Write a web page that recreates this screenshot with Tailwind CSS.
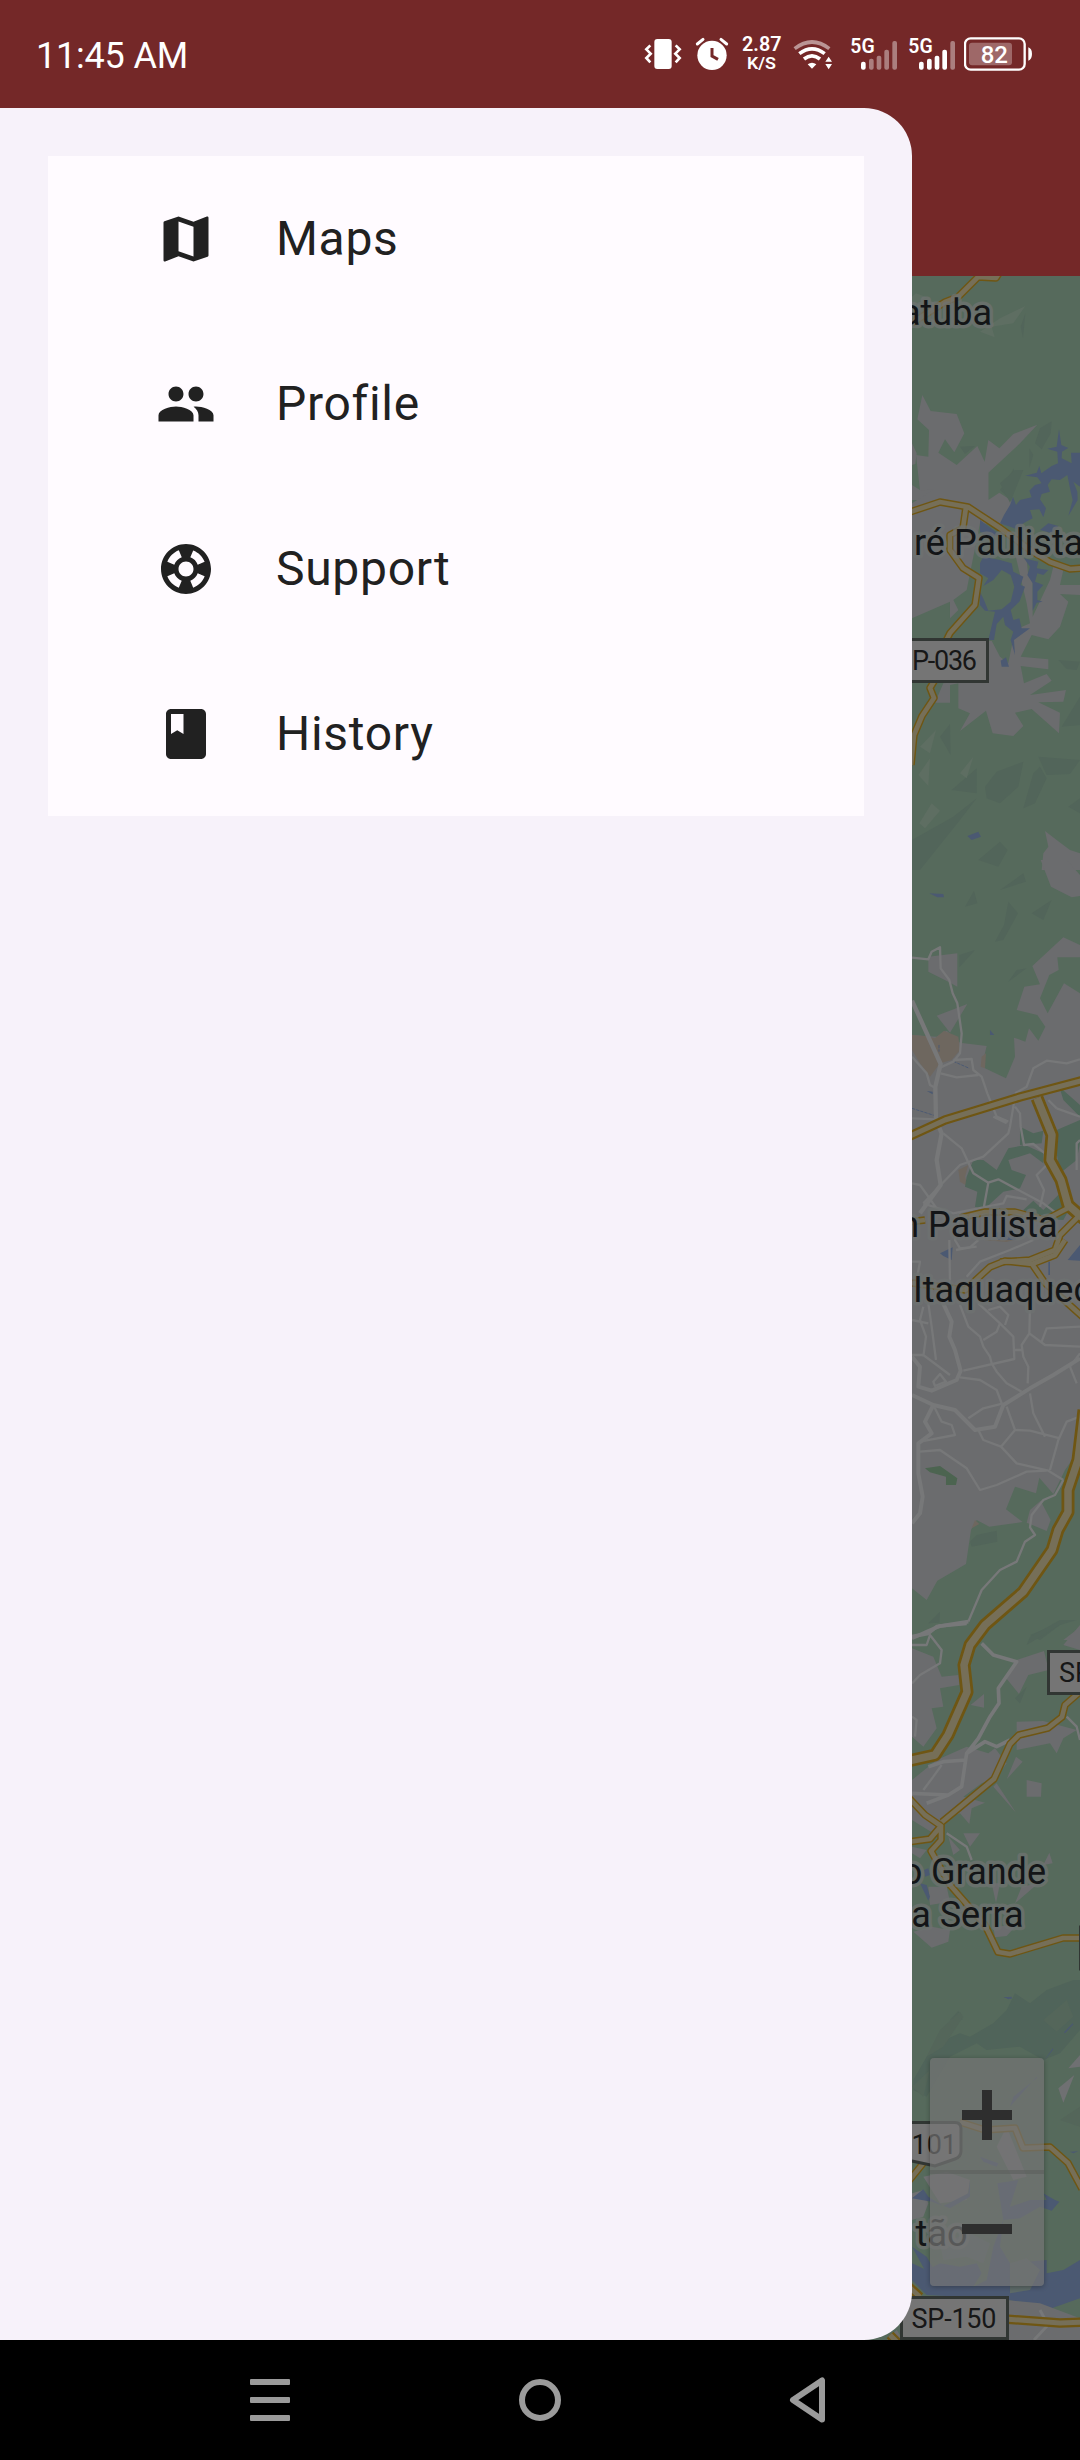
<!DOCTYPE html>
<html lang="en">
<head>
<meta charset="utf-8">
<title>Maps</title>
<script src="https://cdn.jsdelivr.net/npm/@tailwindcss/browser@4"></script>
</head>
<body class="bg-black">
<div class="relative flex h-[2460px] w-[1080px] flex-col overflow-hidden font-['Roboto',sans-serif]">

  <!-- App bar with the system status bar on top -->
  <header class="h-[276px] shrink-0 bg-[#742828]">
    <div class="flex h-[108px] items-start justify-between pl-[36px] pr-[47px] text-white">
      <span class="mt-[36px] text-[36px] leading-[40px] tracking-[-0.2px]">11:45 AM</span>
      <div class="mt-[35px] flex h-[36px]">
        <svg class="h-[36px] w-[38px]" viewBox="42 105 114 108" fill="none" stroke="#fff" stroke-width="8">
          <rect x="73" y="117" width="52" height="90" rx="9" fill="#fff" stroke="none"/>
          <path d="M61 136 49 148 62 161 49 174 61 187M137 136 149 148 136 161 149 174 137 187"/>
        </svg>
        <svg class="ml-[13px] h-[36px] w-[34px]" viewBox="195 105 102 108" fill="none" stroke="#fff" stroke-linecap="round">
          <circle cx="246" cy="166" r="44" fill="#fff" stroke="none"/>
          <path d="M202 132 219 118M290 132 273 118" stroke-width="9"/>
          <path d="M246 144V168L264 178" stroke="#742828" stroke-width="9" stroke-linecap="butt"/>
        </svg>
        <svg class="ml-[13px] h-[36px] w-[40px] overflow-visible" viewBox="742 35 40 36" fill="#fff" font-weight="600">
          <text x="742" y="51" font-size="20" textLength="39.500" lengthAdjust="spacingAndGlyphs">2.87</text>
          <text x="747" y="69.300" font-size="16.500" textLength="29" lengthAdjust="spacingAndGlyphs">K/S</text>
        </svg>
        <svg class="ml-[11px] h-[36px] w-[40px]" viewBox="489 105 120 108" fill="none" stroke="#fff" stroke-width="11">
          <path d="M494 146Q546 106 598 146" stroke-opacity=".5"/>
          <path d="M508 161Q546 132 584 161M522 177Q546 158 570 177"/>
          <path d="M533 193Q546 184 559 193L546 206Z" fill="#fff" stroke="none"/>
          <path d="M596 170 606 185H586ZM596 208 586 192H606Z" fill="#fff" stroke="none"/>
        </svg>
        <svg class="ml-[17px] h-[36px] w-[48px]" viewBox="660 105 144 108" fill="#fff">
          <text x="661" y="160" font-size="60" font-weight="600" textLength="73" lengthAdjust="spacingAndGlyphs">5G</text>
          <rect x="693" y="185" width="14" height="24" rx="6"/>
          <g fill-opacity=".4"><rect x="717" y="176" width="14" height="33" rx="6"/><rect x="740" y="167" width="14" height="42" rx="6"/><rect x="763" y="149" width="14" height="60" rx="6"/><rect x="787" y="123" width="14" height="86" rx="6"/></g>
        </svg>
        <svg class="ml-[10px] h-[36px] w-[48px]" viewBox="834 105 144 108" fill="#fff">
          <text x="835" y="160" font-size="60" font-weight="600" textLength="73" lengthAdjust="spacingAndGlyphs">5G</text>
          <rect x="867" y="185" width="14" height="24" rx="6"/><rect x="891" y="176" width="14" height="33" rx="6"/><rect x="914" y="167" width="14" height="42" rx="6"/><rect x="937" y="149" width="14" height="60" rx="6"/>
          <rect x="961" y="123" width="14" height="86" rx="6" fill-opacity=".4"/>
        </svg>
        <svg class="ml-[8px] h-[36px] w-[69px]" viewBox="1002 105 207 108" fill="#fff">
          <rect x="1005" y="115" width="179" height="94" rx="17" fill="none" stroke="#fff" stroke-width="7"/>
          <rect x="1017" y="128" width="129" height="68" rx="9" fill-opacity=".3"/>
          <path d="M1195 142Q1206 146 1206 162Q1206 178 1195 182Z"/>
          <text x="1052" y="188" font-size="73" font-weight="500" textLength="82" lengthAdjust="spacingAndGlyphs">82</text>
        </svg>
      </div>
    </div>
  </header>

  <!-- Map, dimmed by the open drawer -->
  <main class="relative flex h-[2064px] shrink-0 justify-end bg-[#566a5c]">
    <svg class="h-[2064px] w-[220px]" viewBox="860 276 220 2064">
      <rect x="860" y="276" width="220" height="2064" fill="#566a5c"/>

      <!-- land, water and terrain -->
      <g transform="translate(840 100) scale(.33333)" fill="#6b6c6e">
        <path d="M247 885 272 933 350 942 373 1000 343 1057 315 1018 295 1058 350 1095 412 1038 434 1085 445 1020 478 1045 520 1002 592 974 540 1030 445 1118V1200H240V1170L228 1065 265 1070 267 990 232 958Z"/>
        <path d="M216 1030 230 1060 226 1092 216 1095ZM216 1155 240 1170V1200H216Z"/>
        <path d="M216 590 228 580 260 592 216 620ZM420 695 480 655 556 618 520 670 455 680 464 712Z" fill="#5e6e62"/>
        <path d="M585 1030 600 985 635 964 632 1000 605 1048ZM480 1170 522 1105 512 1200ZM360 1040 405 1038 375 1062ZM568 1045 580 1065 568 1103ZM556 640 542 680 549 715Z" fill="#52655a"/>
      </g>
      <g transform="translate(900 470) scale(.33333)">
        <path d="M58 0H265V90L298 68 340 95 325 130 300 165 240 160 200 360 160 390 175 420 150 445 150 395 36 445V100L103 58 60 62Z" fill="#6b6c6e"/>
        <path d="M345 250 380 270 385 318 398 320V440L450 330 460 290 490 300 480 345 540 345V375L480 372 505 395 480 470 445 508 395 495 362 560 445 568V598L362 588 372 640 440 612 455 632 390 675 498 660 490 695 415 697 480 728 477 790 395 717 345 728 370 768 340 798 278 790 258 722 180 783 210 730 175 715V640L150 645V698H105L130 640 230 630 255 515 275 512 300 560 325 580 345 480 390 460 380 400Z" fill="#6b6c6e"/>
        <path d="M302 572 318 562 327 590 305 590ZM202 1098 235 1085 243 1100 215 1110Z" fill="#4b5972"/>
        <path d="M435 1083 470 1110 510 1140 540 1150V1200H425L430 1150 445 1130Z" fill="#6b6c6e"/>
        <g fill="#52655a">
          <path d="M255 950 290 905 370 875 355 950 300 1000 260 985ZM370 1015 400 910 420 890 440 925 405 1000ZM415 860 540 870 510 912 440 915ZM155 960 230 895 230 970ZM120 800 150 762 152 855ZM36 1110 160 1040 230 985 180 1050 60 1200H36ZM235 1170 300 1115 323 1140 295 1190ZM300 40 345 0H370L330 98ZM475 570 540 575 530 600 500 597ZM485 770 540 680V765ZM505 1010 540 985V1030Z"/>
        </g>
        <g fill="#5e6e62"><path d="M60 830 108 780 90 850ZM55 915 90 865 85 948ZM180 910 220 860 200 925ZM58 1060 95 1000 120 1022 75 1075Z"/></g>
      </g>
      <!-- reservoir -->
      <g transform="translate(980 420) scale(.33333)" fill="#4b5972">
        <path d="M237 28 244 75 265 84 246 95 245 115 275 130 273 98H300V200L280 185 292 215 293 240 265 288 278 240 270 205 262 165 240 180 215 178 203 195 210 215 185 222 180 238 198 265 190 292 178 268 150 270 158 295 130 310 118 330 60 310 72 285 90 255 99 230 108 255 120 240 155 232 148 212 165 195 185 190 172 172 136 167 170 158 178 138 184 160 215 138 234 130 232 95 202 86 230 80Z"/>
        <path d="M180 330 205 310 235 318 215 340ZM0 300 60 345 30 350 0 335Z"/>
        <path d="M10 410 60 420 95 430 100 455 130 470 122 495 135 500 118 545 92 570 100 600 118 595 125 625 150 625 102 660 105 705 92 660 100 635 75 615 70 590 50 612 42 660H25L45 575 15 572 0 555V515L12 540 25 572 65 568 92 545 103 500 92 465 65 450 40 480 10 498 25 475 0 460V430Z"/>
        <path d="M132 415 175 425 170 445 205 450 190 465 172 460 165 485 190 495 172 515V540L188 545 170 548 158 572V490L142 465 150 440Z"/>
      </g>
      <g transform="translate(900 860) scale(.33333)">
        <path d="M36 525 75 528 110 530 140 512 180 548 260 558 250 600 255 625 318 655 345 590 342 533 376 545 387 505 415 542 436 500 412 465 350 450 373 380 420 373 397 318 490 232 540 255V292H472L476 330 448 345 420 415 443 460 492 370 540 400V1200H36ZM422 0H500L540 45V108L515 112 453 80ZM85 290 172 280 172 380 145 365 85 335ZM110 467 202 432 150 518Z" fill="#6b6c6e"/>
        <path d="M36 525 75 528 105 535 132 512 175 530 180 570 155 600 120 610 90 650 60 610 36 570ZM175 930 205 915 195 950 205 980 180 965ZM245 590 258 580 255 625 242 620Z" fill="#6e675f"/>
        <path d="M478 680 500 700 540 735V770L490 720ZM470 810 540 780V850L530 900 480 940 470 880ZM360 800 400 820 430 812 425 850 360 855ZM220 900 250 900 290 930 325 865 375 855 430 880 430 910 390 880 325 900 335 930 378 945 360 985 310 995 250 1050 225 1040 232 995 195 980 200 950ZM370 1050 400 1022 430 1050 480 1000 515 1035 490 1080 400 1075Z" fill="#50665a"/>
        <path d="M285 245 312 195 325 125 354 160 310 240ZM395 160 455 120 430 180ZM300 90 370 40 378 65ZM195 140 222 92 232 130ZM178 285 225 270 178 322ZM325 365 350 330 380 325Z" fill="#52655a"/>
        <path d="M88 100 130 102 132 112 112 112ZM270 510 283 525 270 525ZM80 693 98 695 98 703Z" fill="#4b5972"/>
        <path d="M160 604 208 625M36 745 105 767M117 555V575" stroke="#4b5972" stroke-width="3" stroke-dasharray="10 3"/>
        <path d="M280 1120 330 1110 350 1140 300 1145ZM122 1170 140 1168 158 1162 155 1195 125 1180ZM500 1190 540 1150V1200H500Z" fill="#4b5972"/>
      </g>
      <g transform="translate(900 1240) scale(.33333)">
        <path d="M36 0H540V625L495 690 460 762 418 713 408 760 345 740 318 808 368 846 268 860 230 840 213 870 198 972 112 1022 80 1080 36 1045Z" fill="#6b6c6e"/>
        <path d="M422 782 452 840 440 873 380 848 390 810ZM490 1200 540 1162V1200Z" fill="#6b6c6e"/>
        <path d="M75 685 120 678 172 715 168 735H138V710L90 697Z" fill="#4c6450"/>
        <path d="M503 60 540 15V62ZM120 40 158 22 155 60 130 48ZM445 65H450V105H445Z" fill="#4b5972"/>
        <path d="M250 0H340L320 6ZM215 865 225 840 238 852Z" fill="#6e675f"/>
        <path d="M210 905 230 885 290 872 292 905 215 920ZM85 1150 120 1115 118 1148ZM390 1185 500 1140 420 1200Z" fill="#52655a"/>
      </g>
      <g transform="translate(900 1620) scale(.33333)">
        <path d="M36 85 100 110 125 170 175 165 178 195 120 205 130 260 95 265 110 325 70 380 36 350ZM36 480 110 420 200 380 265 400 285 385 320 430 290 470 245 490 190 530 255 548 215 565 208 612 180 580 130 600 100 640 36 600ZM315 170 350 120 432 93 446 150 385 165 357 222ZM490 75 540 15V90ZM212 255 252 222V263ZM380 480 425 490 423 530H380ZM290 490 348 578 280 500ZM320 478 348 410 368 425ZM350 305 430 303 530 330 490 355 470 400 450 370 350 390ZM145 650 180 690 160 705ZM190 640 240 640 210 680ZM36 680 80 690 60 715 36 700ZM85 800 140 800 150 845 90 855ZM345 850 365 800 415 790ZM275 790H300L288 850ZM430 735 448 698 458 730ZM40 935 95 920 150 930 145 965 95 983ZM280 920 350 915 320 948 285 952Z" fill="#6b6c6e"/>
        <path d="M72 750 85 745 90 765 75 770ZM60 790 80 795 90 830 85 842ZM312 1131H335L325 1138Z" fill="#4b5972"/>
        <path d="M380 75 480 15 530 0H480L390 50ZM345 235 380 200 360 250ZM150 1200 175 1172 188 1200Z" fill="#52655a"/>
      </g>
      <g transform="translate(860 1980) scale(.33333)">
        <path d="M160 300 200 230 230 190 300 160 330 170 400 130 440 90 465 40 510 70 560 30 640 0H660V150L600 220 550 240 480 200 380 210 350 190 270 230 200 350 160 330Z" fill="#50645a"/>
        <path d="M240 150 300 95 310 110 250 200 200 230ZM550 120 620 60 640 110 590 155ZM156 320 210 270 190 350ZM600 420 660 380V440Z" fill="#54665a"/>
        <path d="M625 265 660 225V260ZM595 325 643 285 610 368ZM156 640 190 630 205 670 190 710 156 720ZM190 590 260 575 330 600 320 660 240 670ZM410 500 440 440 500 590 460 600Z" fill="#6f7072"/>
        <path d="M430 52 455 50 455 57ZM612 157 638 130 640 133 615 160ZM552 243 578 205 580 208ZM630 515 655 514 640 520ZM450 380 530 290 532 293 460 350ZM360 530 415 550 410 560 370 545Z" fill="#4b5972"/>
        <path d="M156 655 190 628 205 650 250 678 325 640 330 600V650L270 685 215 665ZM412 610 475 600 450 680 510 660 560 660 550 640 585 660 598 665 575 692 540 680 480 715 430 720 420 800 450 850 560 840 560 880 610 870 660 840V955L560 990 520 970 440 960 300 950 200 945 156 900V850L200 870 240 850 300 860 350 850 365 880 340 920 380 900 400 800 430 720ZM156 800 200 830 240 900 200 880Z" fill="#4b5972"/>
        <path d="M240 790 330 760 390 790 370 850 320 830 250 840ZM450 850 500 835 540 870 510 930 450 940Z" fill="#5d6a68"/>
        <path d="M440 960 540 970 660 1015V1080H440ZM80 1080 110 1050 130 1080Z" fill="#6b6c6e"/>
      </g>

      <!-- local streets -->
      <g fill="none" stroke="#777879" stroke-width="7" stroke-linejoin="round">
        <g transform="translate(900 860) scale(.33333)">
          <path d="M36 293 85 298 95 275 120 262 122 325 148 360 158 400 172 430 185 520 180 580 160 605 122 622M160 600 215 597 220 630 245 650 262 700 290 770 325 785M122 640 170 652 235 645M36 590 80 640 90 675 108 685M36 775 108 778M345 700 380 680 400 625 440 602 500 610 540 598M345 710 330 800 325 820 250 890 180 915 122 975 70 1030M345 740 360 760 362 800 372 855 400 852 435 880M130 820 185 865 220 940 265 968 295 958 430 1030 470 1060M265 968 250 1050M70 1030 160 1060 310 1030 320 1008 380 1018M445 910 410 945 432 990 420 1040M470 745 445 720M470 745 540 770M36 970 60 975 110 1045M180 1060 165 1140 180 1165 230 1160M540 840 530 850V930M280 770 320 790"/>
          <path d="M36 422 122 612 106 680 108 780 125 820 110 900 122 975 60 1060" stroke-width="13"/>
        </g>
        <g transform="translate(900 1240) scale(.33333)">
          <path d="M150 130 148 0 M168 30 210 22 235 0M200 110 240 65 330 30 400 0M36 65H60L50 120M70 200 60 240 78 290 70 350M85 190 95 260 108 360M36 240 85 250M36 345 70 345 150 405M180 195 205 260 240 290 250 320 270 350 275 370 290 395 320 430 365 455M235 190 300 250 290 275 250 300M300 250 340 290 343 357 190 392M265 210 300 200 325 225 315 255M390 200 388 280 435 315 540 320M388 280 365 315 370 350 385 380 383 430M425 305 440 265 540 260M345 330 365 330M100 425 120 402 138 425 105 438ZM180 412 240 420 290 450 305 490M205 535 250 505 310 490M320 500 345 570 390 572 480 595M345 570 303 620 250 600 235 570M303 620 350 670 445 692 490 720M390 460 400 520 435 590M540 530 500 545 475 600 450 690M100 495 125 545 155 555 165 585 60 605M60 635 120 630 200 685 240 750 290 735 380 695 440 692M490 720 465 765 430 780 395 825 390 862 405 885 375 905 350 965 300 990 245 1050 205 1145M540 340 510 380 530 430"/>
          <path d="M120 170 155 245 148 290 165 330 182 392 170 420 95 452 55 440 60 380 36 350M36 465 100 495 165 510 225 570 285 560 310 495 390 445 460 405 540 355M100 495 75 545 95 580 55 610 55 700 68 770 60 820 36 850" stroke-width="12"/>
          <path d="M205 1145 110 1160 85 1180 36 1190" stroke-width="11"/>
        </g>
        <g transform="translate(900 1620) scale(.33333)">
          <path d="M36 75 80 75 90 45 125 90 120 130 60 165 36 190M36 290 50 300 45 350M70 510 100 470 125 435M500 290 530 320 540 360M140 640 200 680 215 720"/>
          <path d="M36 55 80 35 120 18 200 10M245 70 280 105 350 125 295 205 297 250 270 290 235 355 200 400M330 360 290 380 255 365 200 400 185 500 145 525 80 550M36 520 145 525M200 420 130 425 85 440" stroke-width="11"/>
        </g>
        <path d="M1034 2340 1048 2325 1040 2310" stroke-width="3"/>
      </g>

      <!-- highways: dark casing below, sand fill above -->
      <defs>
        <g id="secondary">
          <path d="M912 323 945 302 958 297 978 277 996 278 1001 270"/>
          <path d="M907 513 940 502 968 507 1000 528 1030 550 1050 562 1070 569 1085 568"/>
          <path d="M966 507 963 528 950 535 950 550 963 568 979 578 975 605 950 633 944 645 944 665 930 688 934 698 922 716 914 735 911 765"/>
          <path d="M908 1222 925 1220M960 1218 985 1212 1015 1212 1045 1220 1070 1207M1080 1215 1060 1235 1055 1250 1030 1260 1000 1262"/>
          <path d="M912 1283 965 1290 990 1267 1005 1261 1032 1264 1055 1255 1065 1240M1032 1264 1045 1283 1084 1318"/>
          <path d="M942 1822 994 1779 1010 1744 1019 1735 1048 1728 1062 1717 1065 1705 1082 1690"/>
          <path d="M908 1797 925 1815 941 1826 930 1839 908 1842M941 1826 941 1840 931 1851 950 1885 985 1925 998 1952 1010 1954 1063 1938H1084"/>
          <path d="M908 2182 925 2161M960 2122 985 2130 1015 2128 1023 2148 1050 2147 1068 2163 1082 2189"/>
        </g>
        <g id="primary">
          <path d="M908 1137 945 1120 1020 1097 1084 1080"/>
          <path d="M1005 2319 1060 2323 1084 2322M908 2286 920 2297M890 2335 900 2345"/>
        </g>
        <g id="motorway">
          <path d="M1037 1098 1052 1135 1050 1160 1061 1180 1068 1205 1084 1219"/>
          <path d="M1084 1410 1078 1460 1068 1490 1068 1512 1058 1530 1052 1550 1023 1592 985 1625 970 1645 964 1665 967 1692 948 1735 935 1755 908 1761"/>
        </g>
      </defs>
      <g fill="none" stroke-linejoin="round">
        <g stroke="#6f5613"><use href="#secondary" stroke-width="7.500"/><use href="#primary" stroke-width="9.500"/><use href="#motorway" stroke-width="13"/></g>
        <g stroke="#766f58"><use href="#secondary" stroke-width="4.700"/><use href="#primary" stroke-width="5"/><use href="#motorway" stroke-width="7.500"/></g>
      </g>

      <!-- place names -->
      <g font-size="36" fill="#131517" stroke="#6e7271" stroke-opacity=".75" stroke-width="7" stroke-linejoin="round" paint-order="stroke">
        <text x="992" y="324.500" text-anchor="end">atuba</text>
        <text x="914" y="554.500">ré Paulista</text>
        <text x="1057.500" y="1237" text-anchor="end">n Paulista</text>
        <text x="913" y="1302">Itaquaquec</text>
        <text x="1046" y="1883.500" text-anchor="end">o Grande</text>
        <text x="1023.500" y="1926.500" text-anchor="end">a Serra</text>
        <text x="967.500" y="2246" text-anchor="end">tão</text>
      </g>

      <!-- road shields -->
      <g fill="#757575" stroke="#313633" stroke-width="3">
        <rect x="890" y="639.500" width="97.500" height="42"/>
        <rect x="1048.500" y="1651.500" width="60" height="42"/>
        <rect x="901.500" y="2297.500" width="106" height="41"/>
        <rect x="1080.500" y="1927" width="20" height="42"/>
        <path d="M890 2122.500H955Q961 2122.500 961 2128.500V2151Q961 2157 955 2159L935 2166 912 2161 890 2153Z"/>
      </g>
      <g font-size="27" fill="#171717">
        <text x="977" y="670" text-anchor="end" textLength="65">P-036</text>
        <text x="1059" y="1682">SP</text>
        <text x="911.500" y="2328" textLength="85">SP-150</text>
        <text x="911.500" y="2153.500">101</text>
      </g>
    </svg>

    <!-- zoom control floats over the map -->
    <div class="absolute right-[36px] top-[1782px] flex h-[228px] w-[114px] flex-col rounded-[4px] bg-[#757575]/70 shadow-[0_1px_5px_rgba(0,0,0,0.3)]">
      <button class="flex h-[112px] items-center justify-center" aria-label="Zoom in">
        <svg class="mt-[2px] h-[50px] w-[50px]" viewBox="0 0 50 50" fill="#2e2e2e"><path d="M20 0h10v20h20v10H30v20H20V30H0V20h20z"/></svg>
      </button>
      <div class="h-[4px] bg-[#5c5f5d]/60"></div>
      <button class="flex h-[112px] items-center justify-center" aria-label="Zoom out">
        <svg class="mb-[2px] h-[10px] w-[50px]" viewBox="0 0 50 10" fill="#2e2e2e"><path d="M0 0h50v10H0z"/></svg>
      </button>
    </div>
  </main>

  <!-- Navigation drawer -->
  <aside class="absolute left-0 top-[108px] h-[2232px] w-[912px] rounded-r-[48px] bg-[#f7f2fa] p-[48px]">
    <nav class="bg-[#fffbff] text-[48px] tracking-[0.7px] text-[#212121]">
      <a class="flex h-[165px] items-center gap-[60px] pl-[108px]">
        <svg class="size-[60px]" viewBox="0 0 24 24" fill="#212121"><path d="M20.500 3l-.16.03L15 5.100 9 3 3.360 4.900c-.21.07-.36.25-.36.48V20.500c0 .28.22.5.5.5l.16-.03L9 18.900l6 2.100 5.640-1.900c.21-.07.36-.25.36-.48V3.500c0-.28-.22-.5-.5-.5zM15 19l-6-2.110V5l6 2.110V19z"/></svg>
        <span>Maps</span>
      </a>
      <a class="flex h-[165px] items-center gap-[60px] pl-[108px]">
        <svg class="size-[60px]" viewBox="0 0 24 24" fill="#212121"><path d="M16 11c1.660 0 2.990-1.340 2.990-3S17.660 5 16 5c-1.660 0-3 1.340-3 3s1.340 3 3 3zm-8 0c1.660 0 2.990-1.340 2.990-3S9.660 5 8 5C6.340 5 5 6.340 5 8s1.340 3 3 3zm0 2c-2.330 0-7 1.170-7 3.500V19h14v-2.500c0-2.330-4.670-3.500-7-3.500zm8 0c-.29 0-.62.02-.97.05 1.160.84 1.970 1.970 1.970 3.450V19h6v-2.500c0-2.330-4.670-3.500-7-3.500z"/></svg>
        <span>Profile</span>
      </a>
      <a class="flex h-[165px] items-center gap-[60px] pl-[108px]">
        <svg class="size-[60px]" viewBox="0 0 24 24" fill="#212121"><path d="M12 2C6.480 2 2 6.480 2 12s4.480 10 10 10 10-4.480 10-10S17.520 2 12 2zm7.460 7.120l-2.780 1.150c-.51-1.360-1.580-2.440-2.950-2.940l1.150-2.780c2.100.8 3.770 2.470 4.580 4.570zM12 15c-1.660 0-3-1.340-3-3s1.340-3 3-3 3 1.340 3 3-1.340 3-3 3zM9.130 4.540l1.170 2.780c-1.380.5-2.470 1.590-2.980 2.970L4.540 9.130c.81-2.110 2.480-3.780 4.590-4.590zM4.540 14.870l2.780-1.150c.51 1.380 1.590 2.460 2.970 2.960l-1.170 2.780c-2.100-.81-3.770-2.480-4.580-4.590zm10.340 4.590l-1.150-2.780c1.370-.51 2.450-1.590 2.950-2.970l2.780 1.170c-.81 2.100-2.480 3.770-4.580 4.580z"/></svg>
        <span>Support</span>
      </a>
      <a class="flex h-[165px] items-center gap-[60px] pl-[108px]">
        <svg class="size-[60px]" viewBox="0 0 24 24" fill="#212121"><path d="M18 2H6c-1.100 0-2 .9-2 2v16c0 1.100.9 2 2 2h12c1.100 0 2-.9 2-2V4c0-1.100-.9-2-2-2zM6 4h5v8l-2.500-1.500L6 12V4z"/></svg>
        <span>History</span>
      </a>
    </nav>
  </aside>

  <!-- System navigation -->
  <footer class="flex h-[120px] shrink-0 items-center justify-between bg-black pl-[240px] pr-[240px]">
    <svg class="size-[60px]" viewBox="0 0 60 60" fill="#9b9b9b"><rect x="10" y="9" width="40" height="6" rx="1"/><rect x="10" y="27" width="40" height="6" rx="1"/><rect x="10" y="45" width="40" height="6" rx="1"/></svg>
    <svg class="size-[60px]" viewBox="0 0 60 60" fill="none" stroke="#9b9b9b" stroke-width="6"><circle cx="30" cy="30" r="18"/></svg>
    <svg class="size-[60px]" viewBox="0 0 60 60" fill="none" stroke="#9b9b9b" stroke-width="6" stroke-linejoin="round"><path d="M42 10.500V49.500L13 30Z"/></svg>
  </footer>
</div>
</body>
</html>
